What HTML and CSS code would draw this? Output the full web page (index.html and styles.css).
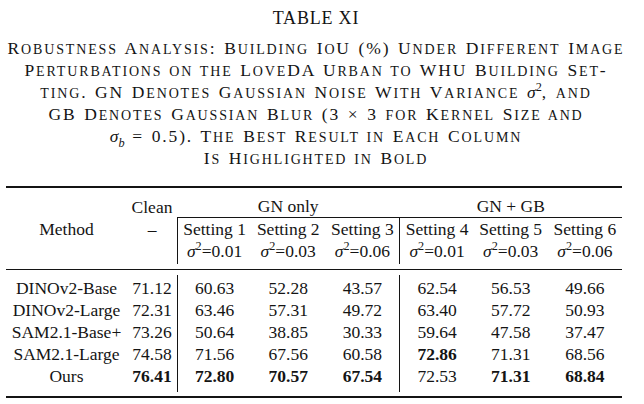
FILE: index.html
```html
<!DOCTYPE html>
<html>
<head>
<meta charset="utf-8">
<link rel="stylesheet" href="styles.css">
</head>
<body>
<div class="page">
  <div class="title">TABLE XI</div>
  <div class="caption">
    <div class="ln">R<span class="sc">obustness</span> A<span class="sc">nalysis</span>: B<span class="sc">uilding</span> I<span class="sc">o</span>U (%) U<span class="sc">nder</span> D<span class="sc">ifferent</span> I<span class="sc">mage</span></div>
    <div class="ln">P<span class="sc">erturbations on the</span> L<span class="sc">ove</span>DA U<span class="sc">rban to</span> WHU B<span class="sc">uilding</span> S<span class="sc">et</span>-</div>
    <div class="ln"><span class="sc">ting</span>. GN D<span class="sc">enotes</span> G<span class="sc">aussian</span> N<span class="sc">oise</span> W<span class="sc">ith</span> V<span class="sc">ariance</span> <span class="m">σ</span><sup>2</sup>, <span class="sc">and</span></div>
    <div class="ln">GB D<span class="sc">enotes</span> G<span class="sc">aussian</span> B<span class="sc">lur</span> (3 × 3 <span class="sc">for</span> K<span class="sc">ernel</span> S<span class="sc">ize and</span></div>
    <div class="ln"><span class="m">σ</span><sub>b</sub> = 0.5). T<span class="sc">he</span> B<span class="sc">est</span> R<span class="sc">esult in</span> E<span class="sc">ach</span> C<span class="sc">olumn</span></div>
    <div class="ln">I<span class="sc">s</span> H<span class="sc">ighlighted in</span> B<span class="sc">old</span></div>
  </div>
  <table class="tbl">
    <colgroup>
      <col class="c-method">
      <col class="c-clean">
      <col class="c-set"><col class="c-set"><col class="c-set">
      <col class="c-set"><col class="c-set"><col class="c-set">
    </colgroup>
    <thead>
      <tr class="h1">
        <th></th>
        <th>Clean</th>
        <th colspan="3" class="grp">GN only</th>
        <th colspan="3" class="grp">GN + GB</th>
      </tr>
      <tr class="h2">
        <th>Method</th>
        <th>–</th>
        <th class="vl">Setting 1</th>
        <th>Setting 2</th>
        <th>Setting 3</th>
        <th class="vl">Setting 4</th>
        <th>Setting 5</th>
        <th>Setting 6</th>
      </tr>
      <tr class="h3">
        <th></th>
        <th></th>
        <th class="vl"><i>σ</i><sup>2</sup>=0.01</th>
        <th><i>σ</i><sup>2</sup>=0.03</th>
        <th><i>σ</i><sup>2</sup>=0.06</th>
        <th class="vl"><i>σ</i><sup>2</sup>=0.01</th>
        <th><i>σ</i><sup>2</sup>=0.03</th>
        <th><i>σ</i><sup>2</sup>=0.06</th>
      </tr>
      <tr class="midrule"><td colspan="8"><div class="rule thin"></div></td></tr>
    </thead>
    <tbody>
      <tr class="first">
        <td>DINOv2-Base</td><td>71.12</td>
        <td class="vl">60.63</td><td>52.28</td><td>43.57</td>
        <td class="vl">62.54</td><td>56.53</td><td>49.66</td>
      </tr>
      <tr>
        <td>DINOv2-Large</td><td>72.31</td>
        <td class="vl">63.46</td><td>57.31</td><td>49.72</td>
        <td class="vl">63.40</td><td>57.72</td><td>50.93</td>
      </tr>
      <tr>
        <td>SAM2.1-Base+</td><td>73.26</td>
        <td class="vl">50.64</td><td>38.85</td><td>30.33</td>
        <td class="vl">59.64</td><td>47.58</td><td>37.47</td>
      </tr>
      <tr>
        <td>SAM2.1-Large</td><td>74.58</td>
        <td class="vl">71.56</td><td>67.56</td><td>60.58</td>
        <td class="vl"><b>72.86</b></td><td>71.31</td><td>68.56</td>
      </tr>
      <tr class="last">
        <td>Ours</td><td><b>76.41</b></td>
        <td class="vl"><b>72.80</b></td><td><b>70.57</b></td><td><b>67.54</b></td>
        <td class="vl">72.53</td><td><b>71.31</b></td><td><b>68.84</b></td>
      </tr>
      <tr class="botrule"><td colspan="8"><div class="rule thick"></div></td></tr>
    </tbody>
  </table>
</div>
</body>
</html>
```

FILE: styles.css
```css
html, body {
  margin: 0;
  padding: 0;
  background: #ffffff;
}

body {
  font-family: "Liberation Serif", "Times New Roman", serif;
  font-size: 17.5px;
  color: #141414;
}

.page {
  width: 632px;
  padding-top: 7px;
}

.title {
  text-align: center;
  line-height: 22px;
  margin-bottom: 8px;
  font-size: 18px;
  letter-spacing: 0.8px;
}

.caption {
  text-align: center;
  font-size: 17.5px;
  letter-spacing: 1.85px;
  word-spacing: 1.5px;
  margin-bottom: 17px;
}

.caption .ln {
  height: 22px;
  line-height: 22px;
  white-space: nowrap;
}

.caption .sc {
  font-size: 0.8em;
  line-height: 0;
  text-transform: uppercase;
}

.caption .m {
  font-style: italic;
  letter-spacing: 0;
}

.caption sup,
.caption sub {
  font-size: 0.7em;
  line-height: 0;
  letter-spacing: 0;
}

.caption sub {
  font-style: italic;
}

.tbl {
  margin-left: 6px;
  width: 616px;
  table-layout: fixed;
  border-collapse: separate;
  border-spacing: 0;
  border-top: 2px solid #141414;
}

.c-method { width: 121px; }
.c-clean { width: 50px; }
.c-set { width: 74.17px; }

.tbl th,
.tbl td {
  font-weight: normal;
  text-align: center;
  padding: 0;
  line-height: 22px;
  white-space: nowrap;
}

.tbl b {
  font-weight: bold;
}

.tbl sup {
  font-size: 0.7em;
  line-height: 0;
}

.tbl .h1 th {
  padding-top: 7px;
}

.tbl .h1 th.grp {
  border-bottom: 1px solid #141414;
}

.tbl .h3 th {
  line-height: 23px;
  padding-bottom: 1px;
}

.tbl .vl {
  border-left: 1px solid #141414;
}

.tbl .midrule td {
  padding: 5px 0;
  line-height: 0;
}

.tbl .botrule td {
  padding: 4px 0 0 0;
  line-height: 0;
}

.rule {
  background: #141414;
}

.rule.thin { height: 1px; }
.rule.thick { height: 2px; }

.tbl tbody .first td {
  padding-top: 2px;
}

.tbl tbody .last td {
  padding-bottom: 5px;
}
```
